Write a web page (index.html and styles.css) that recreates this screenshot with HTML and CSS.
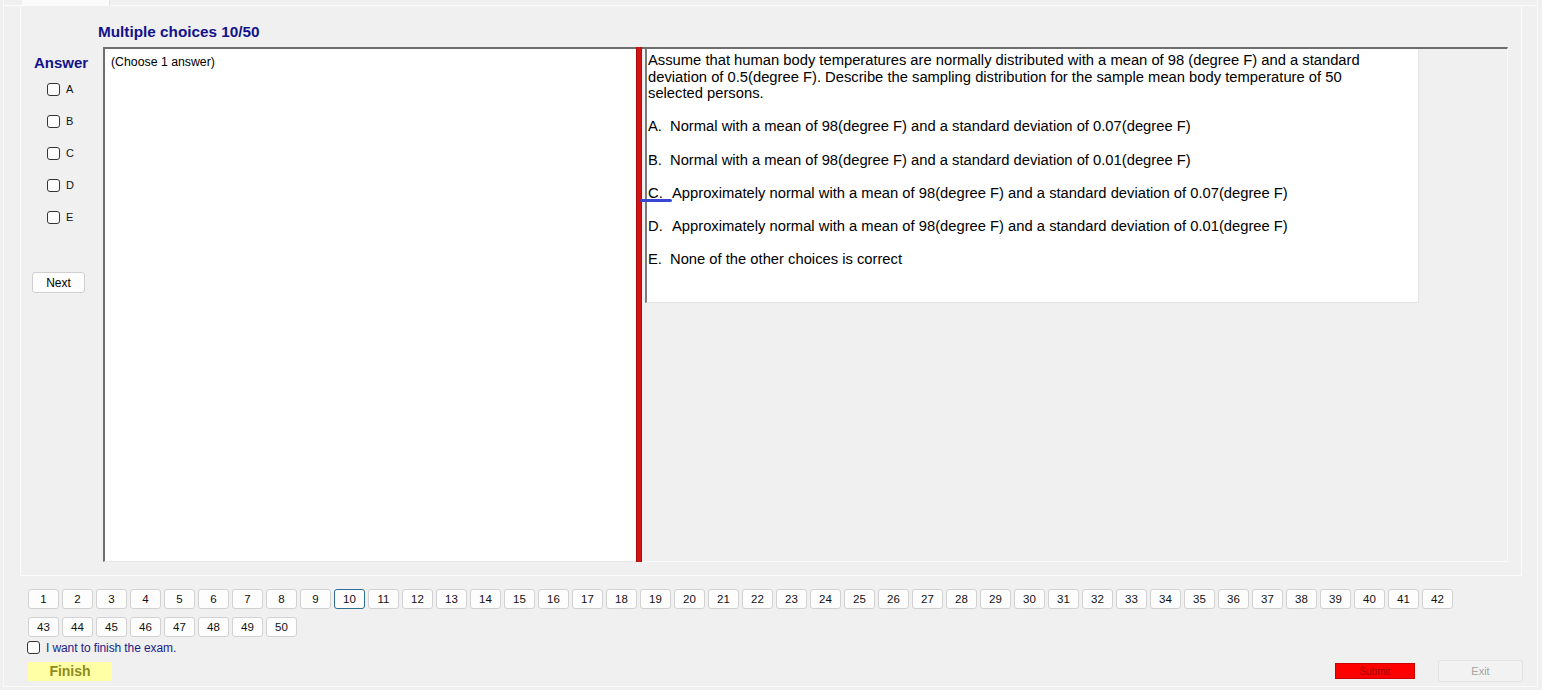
FILE: index.html
```html
<!DOCTYPE html>
<html>
<head>
<meta charset="utf-8">
<link rel="stylesheet" href="styles.css">
</head>
<body>
<div class="frame">
  <div class="tabstrip"><div class="tab"></div></div>
  <div class="tabpage">
    <div class="header">Multiple choices 10/50</div>
    <div class="main">
      <div class="answers">
        <div class="answer-title">Answer</div>
        <div class="opt"><span class="cb"></span><span class="opt-l">A</span></div>
        <div class="opt"><span class="cb"></span><span class="opt-l">B</span></div>
        <div class="opt"><span class="cb"></span><span class="opt-l">C</span></div>
        <div class="opt"><span class="cb"></span><span class="opt-l">D</span></div>
        <div class="opt"><span class="cb"></span><span class="opt-l">E</span></div>
        <button class="next">Next</button>
      </div>
      <div class="notes">(Choose 1 answer)</div>
      <div class="splitter"></div>
      <div class="qpanel">
        <div class="qbox">
          <div class="qtext">Assume that human body temperatures are normally distributed with a mean of 98 (degree F) and a standard<br>deviation of 0.5(degree F). Describe the sampling distribution for the sample mean body temperature of 50<br>selected persons.</div>
          <div class="choice"><span class="cl">A.</span>Normal with a mean of 98(degree F) and a standard deviation of 0.07(degree F)</div>
          <div class="choice"><span class="cl">B.</span>Normal with a mean of 98(degree F) and a standard deviation of 0.01(degree F)</div>
          <div class="choice marked"><span class="cl cl-w">C.</span>Approximately normal with a mean of 98(degree F) and a standard deviation of 0.07(degree F)<span class="mark"></span></div>
          <div class="choice"><span class="cl cl-w">D.</span>Approximately normal with a mean of 98(degree F) and a standard deviation of 0.01(degree F)</div>
          <div class="choice"><span class="cl">E.</span>None of the other choices is correct</div>
        </div>
      </div>
    </div>
  </div>
  <div class="nav">
    <button class="qn">1</button><button class="qn">2</button><button class="qn">3</button><button class="qn">4</button><button class="qn">5</button><button class="qn">6</button><button class="qn">7</button><button class="qn">8</button><button class="qn">9</button><button class="qn cur">10</button><button class="qn">11</button><button class="qn">12</button><button class="qn">13</button><button class="qn">14</button><button class="qn">15</button><button class="qn">16</button><button class="qn">17</button><button class="qn">18</button><button class="qn">19</button><button class="qn">20</button><button class="qn">21</button><button class="qn">22</button><button class="qn">23</button><button class="qn">24</button><button class="qn">25</button><button class="qn">26</button><button class="qn">27</button><button class="qn">28</button><button class="qn">29</button><button class="qn">30</button><button class="qn">31</button><button class="qn">32</button><button class="qn">33</button><button class="qn">34</button><button class="qn">35</button><button class="qn">36</button><button class="qn">37</button><button class="qn">38</button><button class="qn">39</button><button class="qn">40</button><button class="qn">41</button><button class="qn">42</button><button class="qn">43</button><button class="qn">44</button><button class="qn">45</button><button class="qn">46</button><button class="qn">47</button><button class="qn">48</button><button class="qn">49</button><button class="qn">50</button>
  </div>
  <div class="finish-check"><span class="cb"></span><span class="fc-text">I want to finish the exam.</span></div>
  <div class="bottom">
    <button class="finish">Finish</button>
    <div class="spacer"></div>
    <button class="submit">Submit</button>
    <button class="exit">Exit</button>
  </div>
</div>
</body>
</html>
```
FILE: styles.css
```css
* { box-sizing: border-box; }
html, body { margin: 0; padding: 0; }
body {
  background: #f0f0f0;
  font-family: "Liberation Sans", Arial, sans-serif;
  color: #000;
  width: 1542px;
  height: 690px;
  overflow: hidden;
}
.frame {
  margin-left: 3px;
  width: 1535px;
  height: 687px;
  border-left: 1px solid #fafafa;
  border-right: 1px solid #fafafa;
  border-bottom: 1px solid #fafafa;
}
.tabstrip {
  height: 6px;
  border-bottom: 1px solid #fbfbfb;
  display: flex;
}
.tab {
  margin-left: 18px;
  width: 88px;
  height: 6px;
  background: #fbfbfb;
  border-right: 1px solid #e2e2e2;
}
.tabpage {
  margin-left: 16px;
  width: 1502px;
  height: 570px;
  border: 1px solid #fcfcfc;
  border-top: none;
}
.header {
  height: 41px;
  padding: 18px 0 0 77px;
  font-weight: bold;
  font-size: 15.3px;
  line-height: 16px;
  color: #12128c;
}
.main {
  display: flex;
  height: 515px;
}
.answers {
  width: 82px;
  display: flex;
  flex-direction: column;
}
.answer-title {
  margin: 8px 0 2px 13px;
  font-weight: bold;
  font-size: 15px;
  line-height: 16px;
  color: #12128c;
}
.opt {
  height: 32px;
  display: flex;
  align-items: center;
  padding-left: 26px;
  gap: 6px;
}
.cb {
  display: inline-block;
  width: 13px;
  height: 13px;
  border: 1px solid #333;
  border-radius: 3px;
  background: #fff;
}
.opt-l {
  font-size: 11px;
  color: #111;
}
.next {
  margin: 39px 0 0 11px;
  width: 53px;
  height: 21px;
  padding: 0;
  background: #fdfdfd;
  border: 1px solid #d0d0d0;
  border-radius: 3px;
  font-family: "Liberation Sans", Arial, sans-serif;
  font-size: 12px;
  color: #000;
}
.notes {
  width: 533px;
  height: 515px;
  background: #fff;
  border-top: 2px solid #6e6e6e;
  border-left: 2px solid #6e6e6e;
  border-bottom: 1px solid #e6e6e6;
  padding: 6px 0 0 6px;
  font-size: 12.3px;
  line-height: 14px;
}
.splitter {
  width: 6px;
  height: 515px;
  background: #d21414;
  border-left: 1px solid #a80a0a;
  border-right: 1px solid #b00c0c;
}
.qpanel {
  width: 866px;
  height: 515px;
  border-top: 2px solid #6e6e6e;
  border-right: 1px solid #fafafa;
  border-bottom: 1px solid #fafafa;
  padding-left: 3px;
}
.qbox {
  width: 774px;
  height: 254px;
  background: #fff;
  border-left: 2px solid #7a7a7a;
  border-bottom: 1px solid #e4e4e4;
  border-right: 1px solid #e4e4e4;
  padding: 3px 0 0 1px;
  font-size: 14.75px;
  line-height: 16.5px;
}
.choice {
  margin-top: 16.8px;
  position: relative;
}
.cl {
  display: inline-block;
  width: 22px;
}
.cl-w { width: 24px; }
.mark {
  position: absolute;
  left: -8px;
  top: 14px;
  width: 32px;
  height: 3.5px;
  border-radius: 2px;
  background: #3846d0;
}
.nav {
  margin: 13px 0 0 24px;
  width: 1426px;
  display: flex;
  flex-wrap: wrap;
  column-gap: 3px;
  row-gap: 8px;
}
.qn {
  width: 31px;
  height: 20px;
  padding: 0;
  background: #fdfdfd;
  border: 1px solid #d2d2d2;
  border-radius: 3px;
  font-family: "Liberation Sans", Arial, sans-serif;
  font-size: 11.5px;
  color: #111;
}
.qn.cur {
  border-color: #2f6f92;
}
.finish-check {
  margin: 2px 0 0 23px;
  height: 17px;
  display: flex;
  align-items: center;
  gap: 6px;
}
.fc-text {
  font-size: 12px;
  color: #1c1c86;
  letter-spacing: -0.1px;
}
.bottom {
  margin: 4px 0 0 24px;
  width: 1495px;
  height: 22px;
  display: flex;
  align-items: center;
}
.spacer { flex: 1; }
.finish {
  width: 84px;
  height: 19px;
  padding: 0;
  background: #ffffa6;
  border: none;
  font-family: "Liberation Sans", Arial, sans-serif;
  font-weight: bold;
  font-size: 14px;
  color: #8c8c1c;
}
.submit {
  width: 80px;
  height: 16px;
  padding: 0;
  margin-right: 23px;
  background: #ff0000;
  border: 1px solid #c80000;
  font-family: "Liberation Sans", Arial, sans-serif;
  font-size: 10px;
  color: #a00000;
}
.exit {
  width: 85px;
  height: 22px;
  padding: 0;
  background: #f2f2f2;
  border: 1px solid #e2e2e2;
  border-radius: 2px;
  font-family: "Liberation Sans", Arial, sans-serif;
  font-size: 11px;
  color: #a4a4a4;
}
```
